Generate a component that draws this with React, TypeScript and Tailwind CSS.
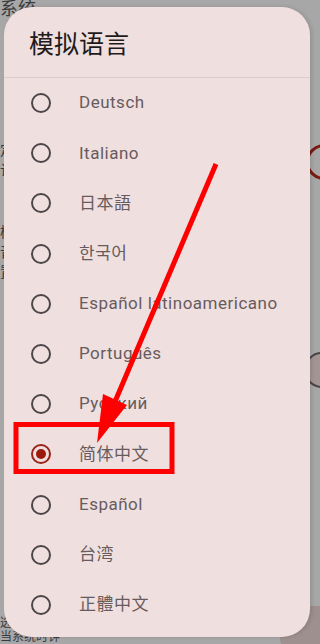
import React from "react";

const langs = [
  "Deutsch",
  "Italiano",
  "日本語",
  "한국어",
  "Español latinoamericano",
  "Português",
  "Русский",
  "简体中文",
  "Español",
  "台湾",
  "正體中文",
];

const font = {
  fontFamily: '"Roboto", "Noto Sans CJK SC", "Noto Sans CJK KR", "Noto Sans CJK JP", sans-serif',
};

export default function App() {
  return (
    <div className="relative w-[320px] h-[644px] overflow-hidden bg-[#a8a7a8]" style={font}>
      {/* faint background content */}
      <div className="absolute left-[0px] top-[0px] text-[18px] text-[#3a3a3a] leading-none">系统</div>
      <div className="absolute left-[0px] top-[140px] text-[14px] text-[#3a3a3a] leading-[20px]">
        <div>定</div>
        <div>认</div>
      </div>
      <div className="absolute left-[0px] top-[222px] text-[14px] text-[#3a3a3a] leading-[20px]">
        <div>模</div>
        <div>音</div>
        <div>置</div>
      </div>
      <div className="absolute right-[-22px] top-[144px] w-[36px] h-[36px] rounded-full border-[3px] border-[#7a1a12]" />
      <div className="absolute right-[-24px] top-[352px] w-[40px] h-[36px] rounded-full bg-[#a39593] border-[2px] border-[#4b4446]" />
      <div className="absolute right-[-20px] top-[606px] w-[60px] h-[50px] rounded-[18px] bg-[#9d908f]" />
      <div className="absolute left-[0px] top-[616px] text-[12px] text-[#3a3a3a] leading-[14px]">
        <div>选</div>
        <div>当系统时钟</div>
      </div>

      {/* dialog */}
      <div className="relative mt-[7px] ml-[4px] w-[306px] h-[630px] rounded-[28px] bg-[#efdfdf] overflow-hidden flex flex-col shadow-[2px_0_4px_rgba(0,0,0,0.12)]">
        <div className="h-[70px] flex items-center pl-[25px] pt-[2px]">
          <span className="text-[25px] text-[#1f1a1c]" style={{ fontFamily: '"Noto Sans CJK SC", sans-serif' }}>
            模拟语言
          </span>
        </div>
        <div className="h-[1px] bg-[#dccbcb]" />
        <div className="flex flex-col">
          {langs.map((l) => {
            const sel = l === "简体中文";
            return (
              <div key={l} className="h-[50.2px] flex items-center pl-[27px]">
                <div
                  className={
                    sel
                      ? "w-[20px] h-[20px] rounded-full border-[2px] border-[#9a2417] flex items-center justify-center"
                      : "w-[20px] h-[20px] rounded-full border-[2px] border-[#4c4649]"
                  }
                >
                  {sel && <div className="w-[10px] h-[10px] rounded-full bg-[#9a1a0c]" />}
                </div>
                <span className="ml-[28px] text-[17px] tracking-[0.5px] text-[#685b5d]">{l}</span>
              </div>
            );
          })}
        </div>
      </div>

      {/* annotations */}
      <svg className="absolute left-0 top-0" width="320" height="644" viewBox="0 0 320 644">
        <rect x="16" y="424.5" width="156" height="47" fill="none" stroke="#ff0000" strokeWidth="5" />
        <line x1="216" y1="164" x2="114" y2="404" stroke="#ff0000" strokeWidth="5" />
        <polygon points="97,443 103,394 127,405" fill="#ff0000" />
      </svg>
    </div>
  );
}
